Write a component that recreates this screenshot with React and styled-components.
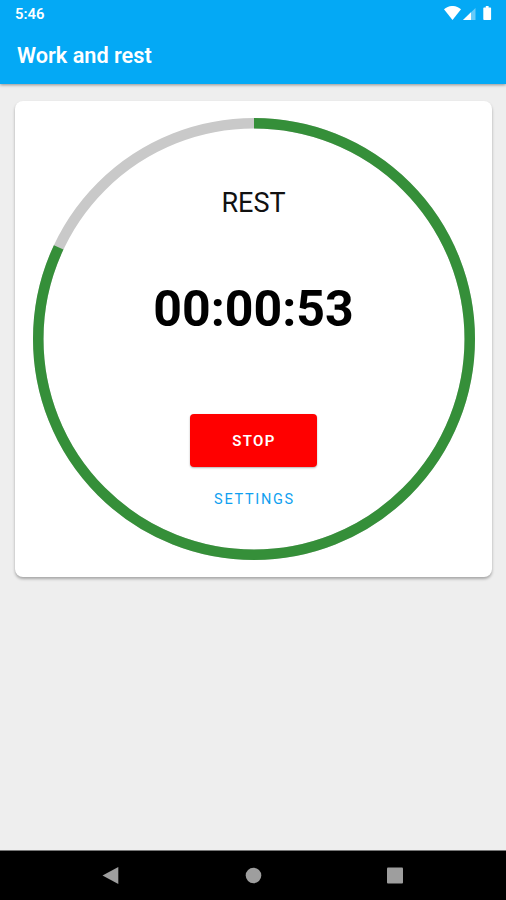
import styled, { createGlobalStyle } from 'styled-components';

const GlobalStyle = createGlobalStyle`
  * {
    box-sizing: border-box;
  }
  body {
    margin: 0;
    font-family: Roboto, sans-serif;
  }
`;

const Screen = styled.div`
  width: 100%;
  height: 100vh;
  display: flex;
  flex-direction: column;
  background-color: #eeeeee;
  overflow: hidden;
`;

const Header = styled.header`
  height: 84px;
  flex-shrink: 0;
  background-color: #04a9f5;
  color: #ffffff;
  box-shadow: 0 1px 3px rgba(0, 0, 0, 0.4);
`;

const StatusBar = styled.div`
  height: 28px;
  padding: 0 13px 0 15px;
  display: flex;
  align-items: center;
  justify-content: space-between;
`;

const Clock = styled.span`
  font-size: 14.8px;
  font-weight: 600;
  line-height: 28px;
`;

const StatusIcons = styled.svg`
  display: block;
  width: 49px;
  height: 16px;
`;

const Title = styled.h1`
  margin: 0;
  padding-left: 17px;
  font-size: 21.7px;
  font-weight: 600;
  line-height: 56px;
`;

const Main = styled.main`
  flex: 1;
  padding: 17px 14px 0 15px;
`;

const Card = styled.section`
  height: 476px;
  display: grid;
  place-items: center;
  background-color: #ffffff;
  border-radius: 8px;
  box-shadow: 0 2px 3px rgba(0, 0, 0, 0.3);
`;

const Ring = styled.svg`
  grid-area: 1 / 1;
  display: block;
  width: 442px;
  height: 442px;
`;

const Content = styled.div`
  grid-area: 1 / 1;
  height: 476px;
  padding-top: 85px;
  display: flex;
  flex-direction: column;
  align-items: center;
`;

const Phase = styled.div`
  font-size: 27px;
  line-height: 34px;
  color: #111111;
`;

const Time = styled.div`
  margin-top: 60px;
  font-size: 50px;
  font-weight: 700;
  line-height: 58px;
  color: #000000;
`;

const StopButton = styled.button`
  width: 127px;
  height: 53px;
  margin-top: 76px;
  padding: 1px 0 0 1px;
  border: 0;
  border-radius: 4px;
  background-color: #ff0000;
  color: #ffffff;
  font: 600 15px Roboto, sans-serif;
  letter-spacing: 1.3px;
  box-shadow: 0 1px 2px rgba(0, 0, 0, 0.3);
`;

const SettingsButton = styled.button`
  height: 40px;
  margin-top: 12px;
  padding: 0 0 0 2px;
  border: 0;
  background: none;
  color: #109ff0;
  font: 400 14.5px Roboto, sans-serif;
  letter-spacing: 1.7px;
`;

const NavBar = styled.nav`
  height: 50px;
  flex-shrink: 0;
  padding: 0 102px;
  display: flex;
  align-items: center;
  justify-content: space-between;
  background-color: #000000;
  border-top: 1px solid #777777;
`;

const NavIcon = styled.svg`
  display: block;
  width: 18px;
  height: 18px;
  fill: #9e9e9e;
`;

const RADIUS = 215.75;
const CIRCUMFERENCE = 2 * Math.PI * RADIUS;

function ProgressRing({ progress }) {
  return (
    <Ring viewBox="0 0 442 442" fill="none" strokeWidth="10.5">
      <circle cx="221" cy="221" r={RADIUS} stroke="#c9c9c9" />
      <circle
        cx="221"
        cy="221"
        r={RADIUS}
        stroke="#358f39"
        strokeDasharray={`${CIRCUMFERENCE * progress} ${CIRCUMFERENCE}`}
        transform="rotate(-90 221 221)"
      />
    </Ring>
  );
}

function App() {
  return (
    <>
      <GlobalStyle />
      <Screen>
        <Header>
          <StatusBar>
            <Clock>5:46</Clock>
            <StatusIcons viewBox="0 0 49 16" fill="#ffffff">
              <path d="M0 3.2C5-1.1 12-1.1 17 3.2L8.5 14z" />
              <path d="M31.5 2v12H19z" opacity="0.4" />
              <path d="M27 6.3V14h-8z" />
              <path d="M41.8 0h2.8v1.5h1.7q.8 0 .8.8v10.9q0 .8-.8.8h-6.2q-.8 0-.8-.8V2.3q0-.8.8-.8h1.7z" />
            </StatusIcons>
          </StatusBar>
          <Title>Work and rest</Title>
        </Header>
        <Main>
          <Card>
            <ProgressRing progress={0.8195} />
            <Content>
              <Phase>REST</Phase>
              <Time>00:00:53</Time>
              <StopButton>STOP</StopButton>
              <SettingsButton>SETTINGS</SettingsButton>
            </Content>
          </Card>
        </Main>
        <NavBar>
          <NavIcon viewBox="0 0 18 18">
            <path d="M.5 8.5L16.3 0v17z" />
          </NavIcon>
          <NavIcon viewBox="0 0 18 18">
            <circle cx="9.5" cy="8.5" r="7.8" />
          </NavIcon>
          <NavIcon viewBox="0 0 18 18">
            <rect x="1" y=".5" width="16" height="16" rx="1" />
          </NavIcon>
        </NavBar>
      </Screen>
    </>
  );
}

export default App;
